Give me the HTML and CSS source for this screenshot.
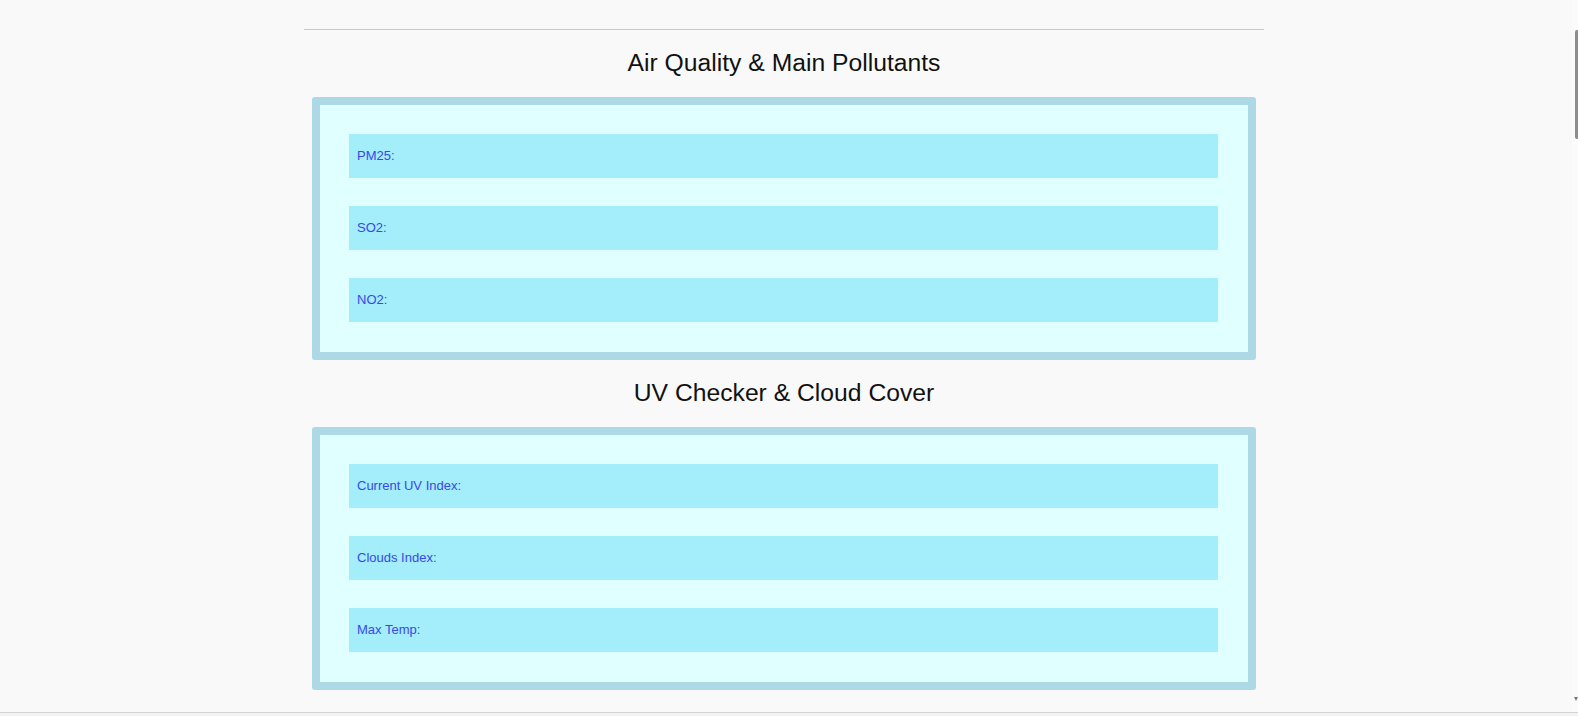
FILE: index.html
```html
<!DOCTYPE html>
<html lang="en">
<head>
<meta charset="utf-8">
<title>Air Quality</title>
<link rel="stylesheet" href="styles.css">
</head>
<body>
<main class="page">
  <hr class="rule">
  <h2 class="title">Air Quality &amp; Main Pollutants</h2>
  <section class="panel">
    <div class="row">PM25:</div>
    <div class="row">SO2:</div>
    <div class="row">NO2:</div>
  </section>
  <h2 class="title">UV Checker &amp; Cloud Cover</h2>
  <section class="panel">
    <div class="row">Current UV Index:</div>
    <div class="row">Clouds Index:</div>
    <div class="row">Max Temp:</div>
  </section>
</main>
<div class="scroll-track"><div class="scroll-thumb"></div><div class="scroll-arrow"></div></div>
<div class="bottom-edge"></div>
</body>
</html>
```

FILE: styles.css
```css
html, body {
  margin: 0;
  padding: 0;
  background: #f9f9f9;
  font-family: "Liberation Sans", Arial, sans-serif;
  overflow: hidden;
}

body {
  padding-right: 10px;
}

.page {
  width: 960px;
  margin: 0 auto;
  padding-top: 29px;
  display: flex;
  flex-direction: column;
  align-items: center;
}

.rule {
  width: 960px;
  height: 0;
  margin: 0;
  border: 0;
  border-top: 1px solid #c9c9c9;
}

.title {
  margin: 19px 0 20px;
  font-size: 24.7px;
  line-height: 28px;
  font-weight: normal;
  color: #111;
  text-align: center;
}

.panel {
  box-sizing: border-box;
  width: 944px;
  border: 8px solid #add8e6;
  border-radius: 3px;
  background: #e0ffff;
  padding: 29px 30px 30px 29px;
  display: flex;
  flex-direction: column;
  gap: 28px;
}

.row {
  height: 44px;
  display: flex;
  align-items: center;
  padding-left: 8px;
  padding-bottom: 1px;
  box-sizing: border-box;
  background: #a3eefa;
  color: #3848ea;
  font-size: 13px;
}

.scroll-track {
  position: fixed;
  top: 0;
  right: 0;
  width: 6px;
  height: 712px;
  background: #fbfbfb;
}

.scroll-thumb {
  position: absolute;
  top: 30px;
  right: 0;
  width: 3px;
  height: 109px;
  background: #8e8e8e;
  border-radius: 2px 0 0 2px;
}

.scroll-arrow {
  position: absolute;
  top: 697px;
  right: 0;
  width: 0;
  height: 0;
  border-left: 2px solid transparent;
  border-right: 2px solid transparent;
  border-top: 4px solid #7a7a7a;
}

.bottom-edge {
  position: fixed;
  left: 0;
  right: 0;
  bottom: 0;
  height: 3px;
  border-top: 1px solid #d3d3d3;
  background: #f3f3f3;
}
```
